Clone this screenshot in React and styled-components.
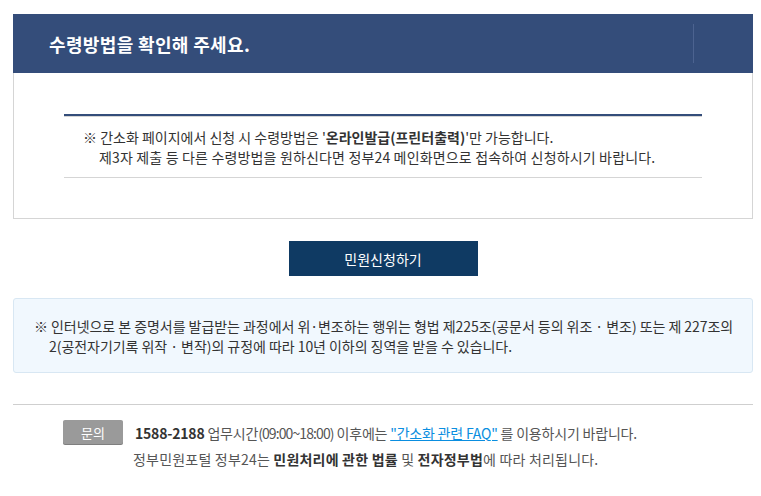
import React from "react";
import styled, { createGlobalStyle } from "styled-components";

const Global = createGlobalStyle`
  html, body { margin: 0; padding: 0; background: #fff; }
  body {
    font-family: "Noto Sans CJK KR", "Noto Sans", sans-serif;
    color: #333;
    font-size: 14px;
  }
  * { box-sizing: border-box; }
`;

const Page = styled.div`
  width: 740px;
  margin: 14px 0 0 13px;
`;

const Header = styled.div`
  height: 59px;
  background: #344d7a;
  display: flex;
  align-items: center;
  justify-content: space-between;
  padding-left: 36px;
`;

const Title = styled.h2`
  margin: 0;
  color: #fff;
  font-size: 18px;
  font-weight: 700;
  letter-spacing: 0.35px;
  line-height: 24px;
`;

const HeaderDivider = styled.span`
  width: 1px;
  height: 39px;
  background: #4c6390;
  margin-right: 59px;
`;

const Panel = styled.div`
  border: 1px solid #d5d5d5;
  border-top: none;
  padding: 41px 50px 40px;
`;

const InfoList = styled.div`
  border-top: 2px solid #344d7a;
  box-shadow: inset 0 1px 0 #d5d5d5;
  border-bottom: 1px solid #d5d5d5;
  padding: 11px 0 10px 35px;
`;

const Line = styled.p`
  margin: 0;
  line-height: 20px;
  letter-spacing: ${(p) => p.$ls || 0}px;
  text-indent: ${(p) => (p.$hang ? "-16px" : "0")};
  white-space: nowrap;
`;

const ButtonRow = styled.div`
  display: flex;
  justify-content: center;
  margin-top: 22px;
`;

const ApplyButton = styled.button`
  width: 189px;
  height: 35px;
  border: none;
  background: #0f3a63;
  color: #fff;
  font-family: inherit;
  font-size: 14px;
  cursor: pointer;
  padding: 0;
`;

const Notice = styled.div`
  margin-top: 22px;
  background: #f1f8fe;
  border: 1px solid #d8e7f3;
  border-radius: 3px;
  padding: 17px 10px 16px 35px;
`;

const NoticeText = styled.p`
  margin: 0;
  line-height: 20px;
  letter-spacing: -0.05px;
  text-indent: -15px;
  white-space: nowrap;
`;

const Rule = styled.hr`
  margin: 31px 0 0;
  border: none;
  border-top: 1px solid #cfcfcf;
`;

const Footer = styled.div`
  display: flex;
  align-items: flex-start;
  gap: 12px;
  padding: 15px 0 0 50px;
  color: #555;
`;

const Badge = styled.span`
  flex: none;
  width: 60px;
  height: 24px;
  background: #9a9a9a;
  border-radius: 2px;
  box-shadow: 0 1px 0 #7f7f7f;
  color: #fff;
  font-size: 13px;
  display: flex;
  align-items: center;
  justify-content: center;
`;

const FooterText = styled.div`
  display: flex;
  flex-direction: column;
`;

const FooterLine = styled.p`
  margin: 0;
  line-height: 26px;
  white-space: nowrap;
  letter-spacing: ${(p) => p.$ls || 0}px;
  margin-left: ${(p) => p.$shift || 0}px;
`;

const Strong = styled.b`
  font-weight: 700;
  color: ${(p) => (p.$dark ? "#333" : "inherit")};
`;

const Hours = styled.span`
  letter-spacing: -0.9px;
`;

const FaqLink = styled.a`
  color: #0a8ee0;
  text-decoration: underline;
`;

export default function App() {
  return (
    <>
      <Global />
      <Page>
        <Header>
          <Title>수령방법을 확인해 주세요.</Title>
          <HeaderDivider />
        </Header>
        <Panel>
          <InfoList>
            <Line $hang>
              ※ 간소화 페이지에서 신청 시 수령방법은 '<Strong>온라인발급(프린터출력)</Strong>'만 가능합니다.
            </Line>
            <Line $ls={0.16}>제3자 제출 등 다른 수령방법을 원하신다면 정부24 메인화면으로 접속하여 신청하시기 바랍니다.</Line>
          </InfoList>
        </Panel>
        <ButtonRow>
          <ApplyButton type="button">민원신청하기</ApplyButton>
        </ButtonRow>
        <Notice>
          <NoticeText>
            ※ 인터넷으로 본 증명서를 발급받는 과정에서 위·변조하는 행위는 형법 제225조(공문서 등의 위조 · 변조) 또는 제 227조의
            <br />
            2(공전자기기록 위작 · 변작)의 규정에 따라 10년 이하의 징역을 받을 수 있습니다.
          </NoticeText>
        </Notice>
        <Rule />
        <Footer>
          <Badge>문의</Badge>
          <FooterText>
            <FooterLine $ls={-0.2}>
              <Strong $dark>1588-2188</Strong> 업무시간<Hours>(09:00~18:00)</Hours> 이후에는{" "}
              <FaqLink href="#">"간소화 관련 FAQ"</FaqLink> 를 이용하시기 바랍니다.
            </FooterLine>
            <FooterLine $shift={-2} $ls={0.2}>
              정부민원포털 정부24는 <Strong $dark>민원처리에 관한 법률</Strong> 및 <Strong $dark>전자정부법</Strong>에 따라 처리됩니다.
            </FooterLine>
          </FooterText>
        </Footer>
      </Page>
    </>
  );
}
